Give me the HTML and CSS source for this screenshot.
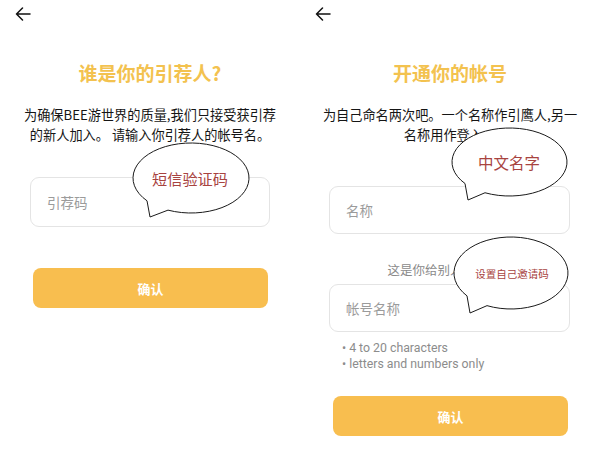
FILE: index.html
```html
<!DOCTYPE html>
<html lang="zh">
<head>
<meta charset="utf-8">
<title>BEE</title>
<link rel="stylesheet" href="styles.css">
</head>
<body>
<div class="screen">
  <section class="panel">
    <header class="top">
      <svg class="back" viewBox="0 0 16 14" width="16" height="14"><path d="M15 7H1.5M7.5 1L1.5 7l6 6" fill="none" stroke="#111" stroke-width="1.5" stroke-linecap="round" stroke-linejoin="round"/></svg>
    </header>
    <h1 class="title">谁是你的引荐人?</h1>
    <p class="desc">为确保BEE游世界的质量,我们只接受获引荐<br>的新人加入。 请输入你引荐人的帐号名。</p>
    <div class="field field-a">引荐码</div>
    <button class="btn btn-a">确认</button>
    <svg class="bubble bubble-a" viewBox="128 140 126 82" width="126" height="82">
      <path class="bubble-shape" d="M168 210.13 A58 35 0 1 0 147 200.8 L150 217 Z"/>
      <text class="bubble-text big" x="190" y="178">短信验证码</text>
    </svg>
  </section>

  <section class="panel">
    <header class="top">
      <svg class="back" viewBox="0 0 16 14" width="16" height="14"><path d="M15 7H1.5M7.5 1L1.5 7l6 6" fill="none" stroke="#111" stroke-width="1.5" stroke-linecap="round" stroke-linejoin="round"/></svg>
    </header>
    <h1 class="title">开通你的帐号</h1>
    <p class="desc">为自己命名两次吧。一个名称作引鹰人,另一<br>名称用作登入。</p>
    <div class="field field-b">名称</div>
    <p class="label">这是你给别人的邀请码</p>
    <div class="field field-c">帐号名称</div>
    <ul class="hints">
      <li>4 to 20 characters</li>
      <li>letters and numbers only</li>
    </ul>
    <button class="btn btn-b">确认</button>
    <svg class="bubble bubble-b" viewBox="148 124 124 80" width="124" height="80">
      <path class="bubble-shape" d="M185 192.76 A57.5 34 0 1 0 165 183.53 L168 200 Z"/>
      <text class="bubble-text big2" x="209" y="162">中文名字</text>
    </svg>
    <svg class="bubble bubble-c" viewBox="150 234 124 84" width="124" height="84">
      <path class="bubble-shape" d="M187 305.65 A57 36 0 1 0 167 295.89 L170 313 Z"/>
      <text class="bubble-text small" x="212" y="273">设置自己邀请码</text>
    </svg>
  </section>
</div>
</body>
</html>
```

FILE: styles.css
```css
html, body {
  margin: 0;
  padding: 0;
  background: #ffffff;
}

body {
  font-family: "Noto Sans CJK SC", "Noto Sans", sans-serif;
  color: #111;
}

.screen {
  display: flex;
  width: 600px;
  height: 474px;
  overflow: hidden;
}

.panel {
  position: relative;
  width: 300px;
  display: flex;
  flex-direction: column;
  align-items: flex-start;
}

.top {
  height: 27px;
  display: flex;
  align-items: center;
  padding-left: 15px;
  box-sizing: border-box;
}

.back {
  display: block;
}

.title {
  align-self: stretch;
  margin: 33px 0 0;
  font-size: 19px;
  line-height: 26px;
  font-weight: 700;
  color: #f3c24f;
  text-align: center;
}

.desc {
  align-self: stretch;
  margin: 19px 0 0;
  font-size: 13.2px;
  line-height: 20px;
  color: #151515;
  text-align: center;
}

.field {
  box-sizing: border-box;
  display: flex;
  align-items: center;
  padding-left: 16px;
  border: 1px solid #e4e4e4;
  border-radius: 9px;
  font-size: 13.5px;
  color: #9b9b9b;
}

.field-a {
  margin: 32px 0 0 30px;
  width: 240px;
  height: 50px;
}

.field-b {
  margin: 41px 0 0 29px;
  width: 241px;
  height: 48px;
}

.field-c {
  margin: 5px 0 0 29px;
  width: 241px;
  height: 48px;
}

.label {
  align-self: stretch;
  margin: 27px 0 0;
  font-size: 12.5px;
  line-height: 18px;
  color: #8a8a8a;
  text-align: center;
}

.hints {
  margin: 9px 0 0 42px;
  padding: 0;
  list-style: none;
  font-family: Roboto, "Noto Sans", sans-serif;
  font-size: 12.3px;
  line-height: 15.5px;
  color: #8c8c8c;
}

.hints li::before {
  content: "\2022";
  margin-right: 3px;
}

.btn {
  box-sizing: border-box;
  margin: 0;
  width: 235px;
  height: 40px;
  border: none;
  border-radius: 8px;
  background: #f8be4f;
  color: #ffffff;
  font-family: "Noto Sans CJK SC", sans-serif;
  font-size: 13px;
  font-weight: 700;
  padding: 0;
}

.btn-a {
  margin: 41px 0 0 33px;
}

.btn-b {
  margin: 24px 0 0 33px;
}

.bubble {
  position: absolute;
  overflow: visible;
}

.bubble-a {
  left: 128px;
  top: 140px;
}

.bubble-b {
  left: 148px;
  top: 124px;
}

.bubble-c {
  left: 150px;
  top: 234px;
}

.bubble-shape {
  fill: #ffffff;
  stroke: #1a1a1a;
  stroke-width: 1;
  stroke-linejoin: round;
}

.bubble-text {
  font-family: "Noto Sans CJK SC", sans-serif;
  fill: #a8433f;
  text-anchor: middle;
  dominant-baseline: central;
}

.bubble-text.big {
  font-size: 15.2px;
}

.bubble-text.big2 {
  font-size: 15.5px;
}

.bubble-text.small {
  font-size: 10.5px;
}
```
